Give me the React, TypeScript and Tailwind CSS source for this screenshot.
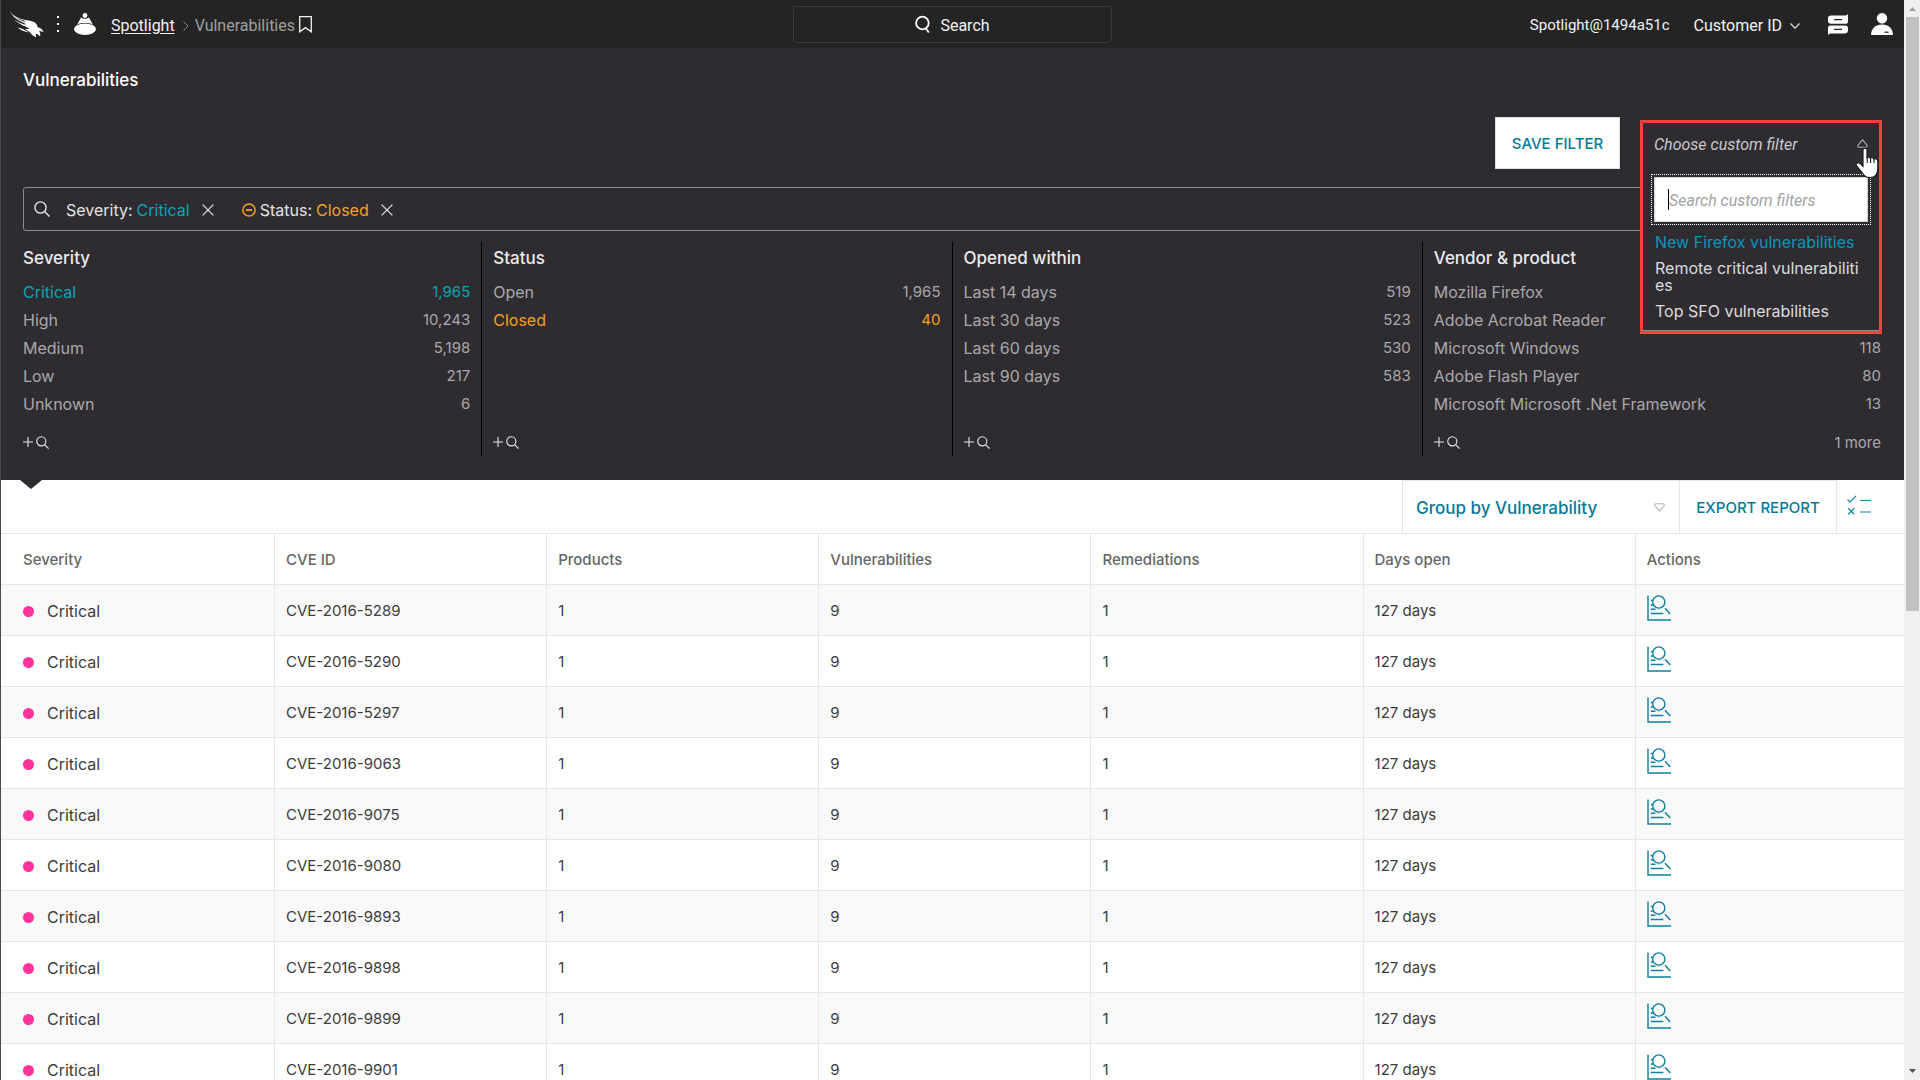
import { useState } from 'react'
import type { ReactNode } from 'react'

interface FilterItem {
  label: string
  count?: string
  tone?: 'teal' | 'amber'
}

interface FilterGroup {
  title: string
  items: FilterItem[]
  more?: string
}

const filterGroups: FilterGroup[] = [
  {
    title: 'Severity',
    items: [
      { label: 'Critical', count: '1,965', tone: 'teal' },
      { label: 'High', count: '10,243' },
      { label: 'Medium', count: '5,198' },
      { label: 'Low', count: '217' },
      { label: 'Unknown', count: '6' },
    ],
  },
  {
    title: 'Status',
    items: [
      { label: 'Open', count: '1,965' },
      { label: 'Closed', count: '40', tone: 'amber' },
    ],
  },
  {
    title: 'Opened within',
    items: [
      { label: 'Last 14 days', count: '519' },
      { label: 'Last 30 days', count: '523' },
      { label: 'Last 60 days', count: '530' },
      { label: 'Last 90 days', count: '583' },
    ],
  },
  {
    title: 'Vendor & product',
    items: [
      { label: 'Mozilla Firefox' },
      { label: 'Adobe Acrobat Reader' },
      { label: 'Microsoft Windows', count: '118' },
      { label: 'Adobe Flash Player', count: '80' },
      { label: 'Microsoft Microsoft .Net Framework', count: '13' },
    ],
    more: '1 more',
  },
]

const columns = ['Severity', 'CVE ID', 'Products', 'Vulnerabilities', 'Remediations', 'Days open', 'Actions']

const cveIds = [
  'CVE-2016-5289',
  'CVE-2016-5290',
  'CVE-2016-5297',
  'CVE-2016-9063',
  'CVE-2016-9075',
  'CVE-2016-9080',
  'CVE-2016-9893',
  'CVE-2016-9898',
  'CVE-2016-9899',
  'CVE-2016-9901',
]

const customFilters = ['New Firefox vulnerabilities', 'Remote critical vulnerabilities', 'Top SFO vulnerabilities']

function FalconLogo() {
  return (
    <svg viewBox="0 0 102 80" className="h-[27px] w-[34px]" fill="#fff" aria-hidden="true">
      <path d="M0 0C8 13 22 20 40 25C54 29 68 28 77 36C82 40 82 45 83 48C89 49 97 52 101 63C96 60 92 60 87 61C91 65 92 70 90 76C86 71 81 69 76 68C78 72 79 75 78 78C72 77 67 72 63 68C60 62 52 58 44 53C50 54 55 54 58 52C54 50 50 48 46 46C34 41 22 35 13 25C23 32 36 38 47 41L45 37C30 31 14 22 5 11C17 21 32 29 46 33L42 28C26 24 6 16 0 0Z" />
      <path d="M23 49C34 51 45 56 57 64C44 62 31 57 23 49Z" />
    </svg>
  )
}

function SpotlightIcon() {
  return (
    <svg viewBox="0 0 22 22" className="h-[22px] w-[22px]" fill="#fff" aria-hidden="true">
      <circle cx="11" cy="2.5" r="2.4" />
      <path d="M7.2 4.2C8.6 6.4 13.4 6.4 14.8 4.2L18.8 11.4C14.5 9.6 7.5 9.6 3.2 11.4Z" />
      <ellipse cx="11" cy="16.2" rx="11" ry="5.8" />
    </svg>
  )
}

function SearchIcon({ className }: { className: string }) {
  return (
    <svg viewBox="0 0 16 16" className={className} fill="none" stroke="currentColor" aria-hidden="true">
      <circle cx="6.5" cy="6.5" r="5.6" />
      <path d="M10.6 10.6L15.5 15.5" />
    </svg>
  )
}

function CloseIcon() {
  return (
    <svg viewBox="0 0 12 12" className="h-3 w-3" fill="none" stroke="#e0e0e0" strokeWidth="1.3" aria-hidden="true">
      <path d="M0.6 0.6L11.4 11.4M11.4 0.6L0.6 11.4" />
    </svg>
  )
}

function InvestigateIcon() {
  return (
    <svg viewBox="0 0 24 26" className="h-[26px] w-6" fill="none" stroke="#117fa0" aria-hidden="true">
      <path d="M1 0.5V25H24" strokeWidth="1.4" />
      <circle cx="11.8" cy="7" r="6.1" strokeWidth="1.4" />
      <path d="M3.8 5.5H6M3.8 10H6.6M3.8 14.3H8.4M3.8 18.5H16.4" strokeWidth="1.4" />
      <path d="M11.3 14.3H12.6" strokeWidth="0.6" />
      <path d="M18 13.2L23.3 19" strokeWidth="1.5" />
    </svg>
  )
}

function TopBar() {
  return (
    <header className="grid h-12 grid-cols-[1fr_319px_1fr] items-center bg-[#242424] font-[Roboto,sans-serif] text-base text-[#f2f2f2]">
      <div className="flex items-center pl-[9px]">
        <FalconLogo />
        <svg viewBox="0 0 3 18" className="ml-[13px] h-[18px] w-[3px]" fill="#fff" aria-hidden="true">
          <rect y="1" width="2" height="2" />
          <rect y="8" width="2" height="2" />
          <rect y="15" width="2" height="2" />
        </svg>
        <span className="ml-3.5">
          <SpotlightIcon />
        </span>
        <nav aria-label="Breadcrumb" className="ml-[15px] flex items-center pt-[3px]">
          <a href="#spotlight" className="underline underline-offset-2">
            Spotlight
          </a>
          <svg viewBox="0 0 6 10" className="mr-1.5 ml-2 h-2.5 w-1.5" fill="none" stroke="#8a8a8a" aria-hidden="true">
            <path d="M0.5 0.5L5 5L0.5 9.5" />
          </svg>
          <span className="text-[#a0a0a0]">Vulnerabilities</span>
        </nav>
        <button type="button" aria-label="Bookmark this page" className="ml-1">
          <svg viewBox="0 0 13 17" className="h-[17px] w-[13px]" fill="none" stroke="#f2f2f2" strokeWidth="1.3" aria-hidden="true">
            <path d="M0.7 0.7H12.3V15.8L6.5 11.6L0.7 15.8Z" />
          </svg>
        </button>
      </div>
      <button type="button" className="flex h-[37px] items-center justify-center gap-2.5 rounded-[3px] border border-[#3a3840]">
        <svg viewBox="0 0 15 19" className="h-[19px] w-[15px]" fill="none" stroke="#fff" strokeWidth="1.8" aria-hidden="true">
          <circle cx="7.4" cy="8" r="6.3" />
          <path d="M10.6 13L13.8 17.6" />
        </svg>
        <span className="pt-[3px]">Search</span>
      </button>
      <div className="flex items-center justify-end pr-[11px]">
        <span className="pt-[3px] text-[15px]">Spotlight@1494a51c</span>
        <button type="button" className="ml-6 flex items-center gap-2 pt-[3px]">
          Customer ID
          <svg viewBox="0 0 10 6" className="h-1.5 w-2.5" fill="none" stroke="#e0e0e0" strokeWidth="1.2" aria-hidden="true">
            <path d="M0.5 0.5L5 5.2L9.5 0.5" />
          </svg>
        </button>
        <button type="button" aria-label="Messages" className="ml-7">
          <svg viewBox="0 0 20 21" className="h-[21px] w-5" aria-hidden="true">
            <path d="M3 1.6H16.5C18 1.6 19 1 20 0V7C20 9 19 9.8 17.5 9.8H3C1 9.8 0 8.8 0 7V4.4C0 2.6 1 1.6 3 1.6Z" fill="#fff" />
            <path d="M2.5 11.4H17C19 11.4 20 12.4 20 14V16.6C20 18.4 19 19.4 17 19.4H4C2 19.4 1 19.8 0 21V14C0 12.2 0.8 11.4 2.5 11.4Z" fill="#fff" />
            <path d="M6 5.7H14M6 15.3H14" stroke="#242424" strokeWidth="1.3" />
          </svg>
        </button>
        <button type="button" aria-label="Account" className="ml-[23px]">
          <svg viewBox="0 0 22 22" className="h-[22px] w-[22px]" aria-hidden="true">
            <circle cx="11" cy="5.2" r="5.2" fill="#fff" />
            <path d="M0 22C0.2 15.4 4.6 11.6 11 11.6C17.4 11.6 21.8 15.4 22 22Z" fill="#fff" />
            <path d="M13.4 19.2H17.6" stroke="#242424" strokeWidth="1.2" />
          </svg>
        </button>
      </div>
    </header>
  )
}

function HandCursor() {
  return (
    <svg viewBox="0 0 24 32" className="pointer-events-none absolute top-6 right-0 h-8 w-6" aria-hidden="true">
      <path
        d="M8 3C8 0.6 12 0.6 12 3V11.5C12 9.4 15.4 9.6 15.4 11.8C15.6 10.2 18.8 10.4 18.8 12.6C19.2 11.2 22.8 11.4 22.8 14V21C22.8 27 20 30.6 15 30.6C11 30.6 9 29 7.4 26L1.4 18.6C0.2 16.8 2.8 14.6 4.8 16.4L8 19.4Z"
        fill="#fff"
        stroke="#1c1c1e"
        strokeWidth="1.2"
      />
      <path d="M12.2 11V16M15.6 11.8V16M19 12.6V16" stroke="#1c1c1e" strokeWidth="1.1" />
    </svg>
  )
}

function CustomFilterMenu() {
  const [query, setQuery] = useState('')

  return (
    <div className="absolute inset-x-0 top-[3px] z-10 border-[3px] border-[#ff4040] bg-[#2f2c31]">
      <button
        type="button"
        className="flex h-[42px] w-full items-center justify-between px-[11px] pt-0.5 font-[Roboto,sans-serif] text-base text-[#c9c9c9] italic"
      >
        Choose custom filter
        <svg viewBox="0 0 11 9" className="mb-1 h-[9px] w-[11px]" fill="none" stroke="#b5b5b5" strokeWidth="1.1" aria-hidden="true">
          <path d="M5.5 0.8L10.2 6.4Q10.4 8.2 9 8.2H2Q0.6 8.2 0.8 6.4Z" />
        </svg>
      </button>
      <div className="mx-2 mt-[9px] border border-dotted border-white p-0.5">
        <div className="relative bg-white">
          <input
            type="text"
            aria-label="Search custom filters"
            placeholder="Search custom filters"
            value={query}
            onChange={(e) => setQuery(e.target.value)}
            className="block h-[45px] w-full border border-[#d6d6d6] px-3.5 pt-0.5 font-[Roboto,sans-serif] text-base text-[#333] italic outline-none placeholder:text-[#a3a3a3]"
          />
          {/* Text caret */}
          <span className="absolute top-3 left-3.5 h-[21px] w-px bg-black" />
        </div>
      </div>
      <ul className="mx-3 mt-[9px] flex flex-col gap-[9px] pb-2.5 text-base leading-[17px]">
        {customFilters.map((name, i) => (
          <li key={name}>
            <a href="#filter" className={`block break-all ${i === 0 ? 'text-[#0a96bd]' : 'text-[#dcdcdc]'}`}>
              {name}
            </a>
          </li>
        ))}
      </ul>
      <div className="h-px bg-[#8a8a8a]" />
      <HandCursor />
    </div>
  )
}

function FilterTag({ name, value, excluded }: { name: string; value: string; excluded?: boolean }) {
  return (
    <div className="flex items-center">
      {excluded && (
        <svg viewBox="0 0 14 14" className="mr-1 h-3.5 w-3.5" fill="none" stroke="#f5a122" strokeWidth="1.5" aria-hidden="true">
          <circle cx="7" cy="7" r="6.1" />
          <path d="M3.9 7H10.1" strokeWidth="1.8" />
        </svg>
      )}
      <span className="text-[#e4e4e4]">{name}:</span>
      <span className={`ml-1 ${excluded ? 'text-[#f5a122]' : 'text-[#0ba5b5]'}`}>{value}</span>
      <button type="button" aria-label={`Remove ${name} filter`} className="ml-3">
        <CloseIcon />
      </button>
    </div>
  )
}

function toneClass(tone?: 'teal' | 'amber') {
  if (tone === 'teal') return 'text-[#0ba5b5]'
  if (tone === 'amber') return 'text-[#f5a122]'
  return 'text-[#a9a8aa]'
}

function FilterColumn({ group }: { group: FilterGroup }) {
  return (
    <section className="flex flex-col border-r border-black px-[11px] pt-1 last:border-transparent">
      <h2 className="text-[17px] leading-6 font-medium text-[#ebebeb]">{group.title}</h2>
      <ul className="mt-2">
        {group.items.map((item) => (
          <li key={item.label}>
            <button type="button" className={`flex h-7 w-full items-center justify-between ${toneClass(item.tone)}`}>
              <span className="text-base">{item.label}</span>
              {item.count && <span>{item.count}</span>}
            </button>
          </li>
        ))}
      </ul>
      <div className="mt-auto flex items-center justify-between pt-2.5">
        <button type="button" aria-label={`Add ${group.title} filter`} className="flex h-7 items-center gap-[3px] text-[#e6e6e6]">
          <svg viewBox="0 0 10 10" className="h-2.5 w-2.5" stroke="currentColor" strokeWidth="1.1" aria-hidden="true">
            <path d="M5 0V10M0 5H10" />
          </svg>
          <SearchIcon className="h-[13px] w-[13px] stroke-[1.4]" />
        </button>
        {group.more && (
          <a href="#more" className="pt-0.5 text-[#a9a8aa]">
            {group.more}
          </a>
        )}
      </div>
    </section>
  )
}

function FilterPanel() {
  return (
    <section className="relative bg-[#2f2c31] px-[22px] pt-5 pb-6">
      <h1 className="text-[17px] leading-6 font-medium text-white">Vulnerabilities</h1>
      <div className="mt-[25px] flex justify-end gap-5">
        <button type="button" className="h-[52px] w-[125px] border border-[#e0e0e0] bg-white pt-0.5 font-medium text-[#067a99]">
          SAVE FILTER
        </button>
        <div className="relative w-[242px]">
          <CustomFilterMenu />
        </div>
      </div>
      <div className="mt-[18px] flex h-11 items-center rounded-[3px] border border-[#8d8c8f] pl-2.5">
        <SearchIcon className="h-4 w-4 stroke-[1.4] text-[#e4e4e4]" />
        <div className="ml-4 flex gap-7 pt-0.5 text-base">
          <FilterTag name="Severity" value="Critical" />
          <FilterTag name="Status" value="Closed" excluded />
        </div>
        <input type="text" aria-label="Add filter" className="ml-3 h-full min-w-0 flex-1 bg-transparent outline-none" />
      </div>
      <div className="-mx-[11px] mt-[11px] grid grid-cols-4">
        {filterGroups.map((group) => (
          <FilterColumn key={group.title} group={group} />
        ))}
      </div>
      <svg viewBox="0 0 22 9" className="absolute top-full left-[19px] h-[9px] w-[22px]" fill="#2f2c31" aria-hidden="true">
        <path d="M0 0H22L11 9Z" />
      </svg>
    </section>
  )
}

function Toolbar() {
  return (
    <div className="flex h-[54px] justify-end border-b border-[#e6e6e6] text-[#067a99]">
      <div className="relative w-[277px] border-t border-l border-[#e6e6e6]">
        <select aria-label="Group by" className="h-full w-full appearance-none pt-[3px] pl-[13px] text-[17px] font-medium outline-none">
          <option>Group by Vulnerability</option>
          <option>Group by Product</option>
        </select>
        <svg viewBox="0 0 11 9" className="pointer-events-none absolute top-[22px] right-3.5 h-[9px] w-[11px]" fill="none" stroke="#b5b5b5" strokeWidth="1.1" aria-hidden="true">
          <path d="M5.5 8.2L10.2 2.6Q10.4 0.8 9 0.8H2Q0.6 0.8 0.8 2.6Z" />
        </svg>
      </div>
      <button type="button" className="w-[158px] border-t border-r border-l border-[#e6e6e6] pt-0.5 font-medium">
        EXPORT REPORT
      </button>
      <button type="button" aria-label="Choose columns" className="w-[67px] pl-2.5">
        <svg viewBox="0 0 24 20" className="mb-1 h-5 w-6" fill="none" stroke="#1a87a8" strokeWidth="1.2" aria-hidden="true">
          <path d="M0.5 4.5L3 7L9 0.8M13 5.5H24M1 13.2L7.4 19.2M7.4 13.2L1 19.2M13 17H24" />
        </svg>
      </button>
    </div>
  )
}

function Th({ children }: { children: ReactNode }) {
  return (
    <th
      scope="col"
      className="w-[14.3%] border-r border-b border-[#e6e6e6] pt-0.5 pl-[11px] text-left font-medium text-[#666] first:w-[14.4%] first:pl-[22px] last:w-auto last:border-r-0"
    >
      {children}
    </th>
  )
}

function Td({ children }: { children: ReactNode }) {
  return <td className="border-r border-b border-[#e6e6e6] pt-0.5 pl-[11px] first:pl-[22px] last:border-r-0">{children}</td>
}

function VulnerabilityTable() {
  return (
    <table className="w-full table-fixed border-separate border-spacing-0 text-[#3c3c3c]">
      <thead>
        <tr className="h-[51px]">
          {columns.map((name) => (
            <Th key={name}>{name}</Th>
          ))}
        </tr>
      </thead>
      <tbody>
        {cveIds.map((id) => (
          <tr key={id} className="h-[51px] odd:bg-[#f9f9f9]">
            <Td>
              <span className="flex items-center gap-[13px] text-base">
                <span className="h-[11px] w-[11px] rounded-full bg-[#ff3399]" />
                Critical
              </span>
            </Td>
            <Td>{id}</Td>
            <Td>1</Td>
            <Td>9</Td>
            <Td>1</Td>
            <Td>127 days</Td>
            <Td>
              <button type="button" aria-label={`Investigate ${id}`} className="block pb-1.5">
                <InvestigateIcon />
              </button>
            </Td>
          </tr>
        ))}
      </tbody>
    </table>
  )
}

function Scrollbar() {
  return (
    <div className="flex w-4 shrink-0 flex-col items-center bg-[#f0f0f0]" aria-hidden="true">
      <svg viewBox="0 0 16 17" className="h-[17px] w-4" fill="#a0a0a0">
        <path d="M5 11L8.5 7L12 11Z" />
      </svg>
      <div className="ml-px h-[55%] w-[13px] bg-[#c1c1c1]" />
      <svg viewBox="0 0 16 17" className="mt-auto h-[17px] w-4" fill="#505050">
        <path d="M5 6L8.5 10L12 6Z" />
      </svg>
    </div>
  )
}

export default function App() {
  return (
    <div className="flex h-screen overflow-hidden bg-white font-[Inter,sans-serif] text-[15px]">
      <main className="min-w-0 flex-1 border-l border-[#4a4a4a]">
        <TopBar />
        <FilterPanel />
        <Toolbar />
        <VulnerabilityTable />
      </main>
      <Scrollbar />
    </div>
  )
}
